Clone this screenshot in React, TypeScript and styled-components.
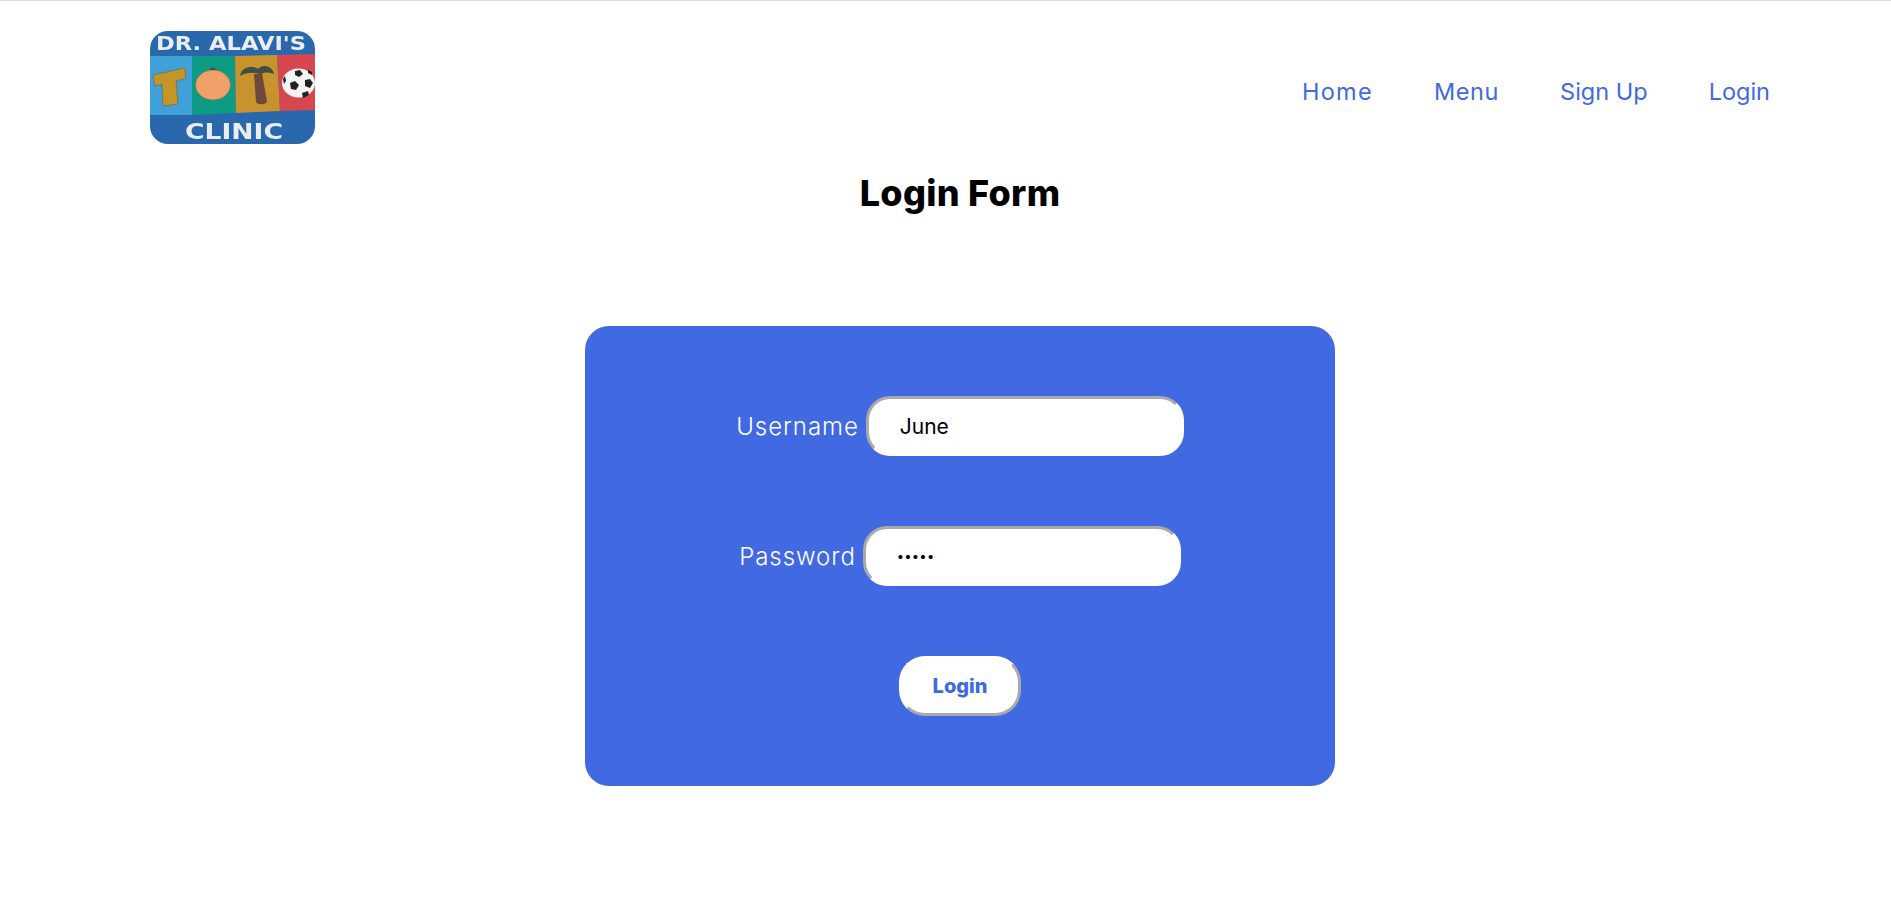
import React from "react";
import styled, { createGlobalStyle } from "styled-components";

const royal = "#4169e1";

const GlobalStyle = createGlobalStyle`
  html, body {
    margin: 0;
    padding: 0;
    overflow: hidden;
    background: #fff;
    font-family: Inter, "Noto Sans", sans-serif;
  }
`;

const Page = styled.div`
  width: 1920px;
  min-height: 921px;
  border-top: 1px solid #ddd;
  box-sizing: border-box;
`;

const Header = styled.header`
  display: flex;
  align-items: center;
  justify-content: space-between;
  padding: 30px 150px 0;
`;

const LogoWrap = styled.div`
  width: 165px;
  height: 113px;
  overflow: hidden;
  border-radius: 18px;
  line-height: 0;
`;

const Nav = styled.nav`
  display: flex;
  gap: 61px;
  margin-top: 8px;
`;

const NavLink = styled.a<{ $track?: number }>`
  color: ${royal};
  font-size: 23.5px;
  line-height: 33px;
  font-weight: 400;
  letter-spacing: ${(p) => p.$track ?? 0}px;
  text-decoration: none;
  cursor: pointer;
`;

const Title = styled.h1`
  margin: 27px 0 0;
  text-align: center;
  color: #000;
  font-size: 36px;
  line-height: 44px;
  font-weight: 800;
  letter-spacing: 0.3px;
`;

const Card = styled.form`
  display: flex;
  flex-direction: column;
  align-items: center;
  gap: 70px;
  width: 750px;
  margin: 111px auto 0;
  padding: 70px 0;
  background: ${royal};
  border-radius: 24px;
`;

const Row = styled.div`
  display: flex;
  align-items: center;
  gap: 7px;
`;

const Label = styled.label`
  color: #fff;
  font-size: 24px;
  font-weight: 300;
  letter-spacing: 0.95px;
`;

const Input = styled.input`
  box-sizing: border-box;
  width: 318px;
  height: 60px;
  padding: 0 31px;
  background: #fff;
  color: #000;
  border: 3px solid;
  border-color: #aaa #fff #fff #aaa;
  border-radius: 24px;
  outline: none;
  font-family: Inter, sans-serif;
  font-size: 21px;

  &[type="password"] {
    font-size: 13px;
    letter-spacing: 0.2px;
  }
`;

const Submit = styled.button`
  box-sizing: border-box;
  width: 122px;
  height: 60px;
  background: #fff;
  color: ${royal};
  border: 3px solid;
  border-color: #fff #aaa #aaa #fff;
  border-radius: 26px;
  font-family: Inter, sans-serif;
  font-size: 20px;
  font-weight: 800;
  cursor: pointer;
`;

const Logo = () => (
  <svg width="165" height="113" viewBox="0 0 165 113">
    <defs>
      <filter id="soft">
        <feGaussianBlur stdDeviation="0.55" />
      </filter>
    </defs>
    <g filter="url(#soft)">
      <rect width="165" height="113" fill="#2a67ad" />
      <polygon points="0,25 42,25 42,84 0,84" fill="#41a0d8" />
      <polygon points="42,25 85,25 86,82 42,84" fill="#119c83" />
      <polygon points="85,25 127,24 130,80 86,82" fill="#c8932f" />
      <polygon points="127,24 165,23 165,79 130,80" fill="#d6474f" />
      <polygon points="3,44 35,37 36,47 26,50 28,73 13,75 12,53 5,55" fill="#c4962a" stroke="#6a5524" strokeWidth="0.5" />
      <ellipse cx="63" cy="54" rx="17.5" ry="15" fill="#f0a068" stroke="#7a6a3a" strokeWidth="0.5" />
      <path d="M59 39 L63 36 L67 39 Z" fill="#3d5a2a" />
      <path d="M90 45 C91 37 101 33 108 38 C112 33 122 34 124 43 C119 41 114 41 111 43 C105 41 96 41 90 45Z" fill="#3f4f40" />
      <path d="M104 43 L112 42 L117 71 C115 74 107 74 106 71Z" fill="#6c4a3e" />
      <ellipse cx="148.5" cy="52" rx="16.5" ry="14.5" fill="#f4f4f4" />
      <polygon points="140,52 145,50 149,54 146,59 141,58" fill="#222" />
      <polygon points="155,49 160,48 163,52 160,57 155,55" fill="#222" />
      <polygon points="145,40 150,39 153,43 149,46 145,44" fill="#222" />
      <polygon points="158,39 162,41 162,44 158,42" fill="#222" />
      <polygon points="152,62 158,60 159,64 153,67" fill="#222" />
      <polygon points="133,48 135,45 136,50 134,53" fill="#222" />
      <text x="6" y="19" textLength="150" lengthAdjust="spacingAndGlyphs" fill="#e8eef2" fontFamily="DejaVu Sans" fontWeight="700" fontSize="20">DR. ALAVI'S</text>
      <text x="35" y="108" textLength="98" lengthAdjust="spacingAndGlyphs" fill="#e8eef2" fontFamily="DejaVu Sans" fontWeight="700" fontSize="22">CLINIC</text>
    </g>
  </svg>
);

export default function App() {
  return (
    <Page>
      <GlobalStyle />
      <Header>
        <LogoWrap>
          <Logo />
        </LogoWrap>
        <Nav>
          <NavLink $track={1.3}>Home</NavLink>
          <NavLink $track={0.6}>Menu</NavLink>
          <NavLink>Sign Up</NavLink>
          <NavLink>Login</NavLink>
        </Nav>
      </Header>
      <Title>Login Form</Title>
      <Card onSubmit={(e) => e.preventDefault()}>
        <Row>
          <Label htmlFor="username">Username</Label>
          <Input id="username" type="text" defaultValue="June" />
        </Row>
        <Row>
          <Label htmlFor="password">Password</Label>
          <Input id="password" type="password" defaultValue="june1" />
        </Row>
        <Submit type="submit">Login</Submit>
      </Card>
    </Page>
  );
}
